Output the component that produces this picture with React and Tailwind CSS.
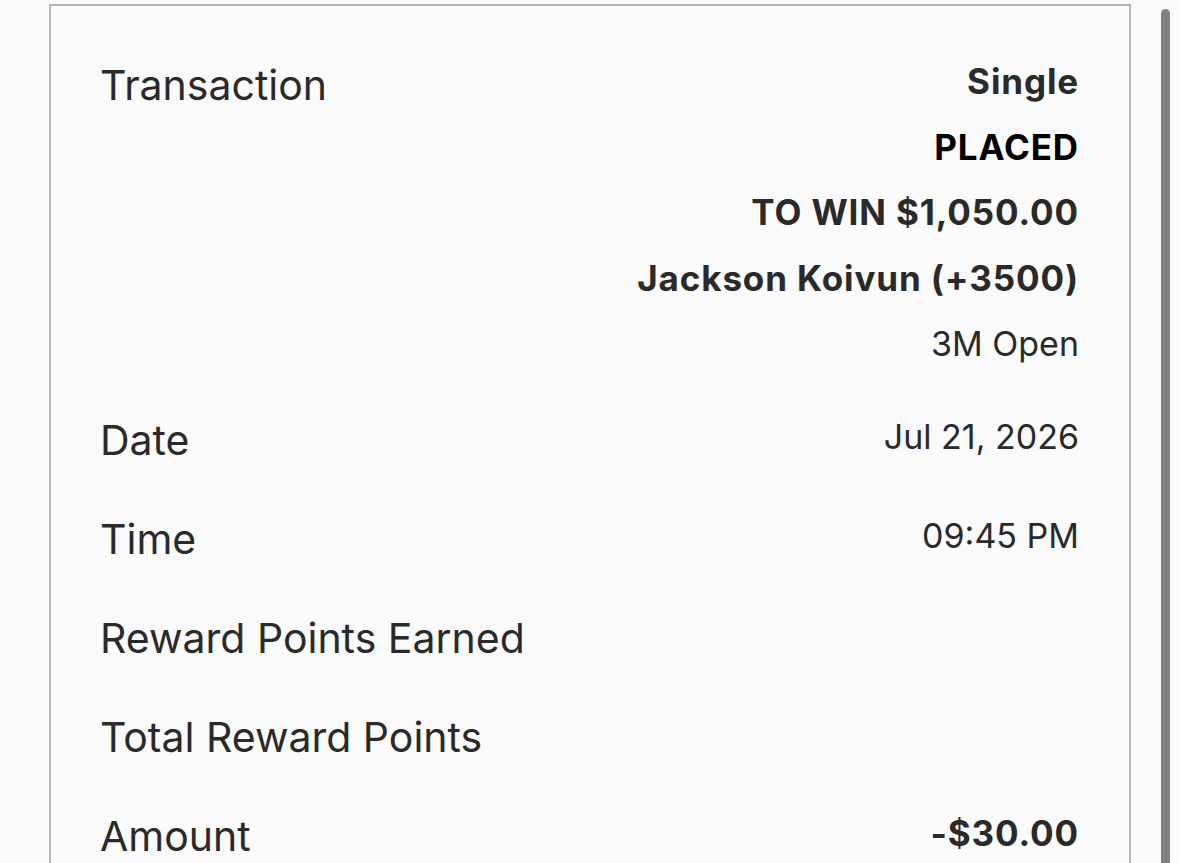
const rows = [
  { label: "Date", value: "Jul 21, 2026" },
  { label: "Time", value: "09:45 PM" },
  { label: "Reward Points Earned", value: "" },
  { label: "Total Reward Points", value: "" },
  { label: "Amount", value: "-$30.00", strong: true },
];

export default function App() {
  return (
    <div className="min-h-screen bg-[#fafafa] font-['Inter','Noto_Sans',sans-serif] text-[#2a2a2a] relative overflow-hidden">
      {/* detail card */}
      <div className="ml-[49px] mt-[4px] w-[1082px] min-h-[900px] border-2 border-b-0 border-[#b4b4b4] pl-[49px] pr-[50px] pt-[43px]">
        <div className="flex flex-col gap-[27px]">
          <div className="flex justify-between items-start">
            <span className="text-[41px] leading-[72px]">Transaction</span>
            <div className="flex flex-col items-end text-[34px] leading-[65.5px]">
              <span className="font-bold text-[35px] tracking-[0.025em]">Single</span>
              <span className="font-bold text-[35px] tracking-[0.025em] text-black">PLACED</span>
              <span className="font-bold text-[35px] tracking-[0.025em]">TO WIN $1,050.00</span>
              <span className="font-bold text-[35px] tracking-[0.025em]">Jackson Koivun (+3500)</span>
              <span>3M Open</span>
            </div>
          </div>

          {rows.map((row) => (
            <div key={row.label} className="flex justify-between items-start">
              <span className="text-[41px] leading-[72px]">{row.label}</span>
              <span
                className={
                  row.strong
                    ? "text-[35px] leading-[66px] font-bold tracking-[0.025em]"
                    : "text-[34px] leading-[66px]"
                }
              >
                {row.value}
              </span>
            </div>
          ))}
        </div>
      </div>

      {/* scrollbar thumb */}
      <div className="absolute right-[9px] top-[9px] bottom-0 w-[9px] rounded-t-full bg-[#808080]" />
    </div>
  );
}
